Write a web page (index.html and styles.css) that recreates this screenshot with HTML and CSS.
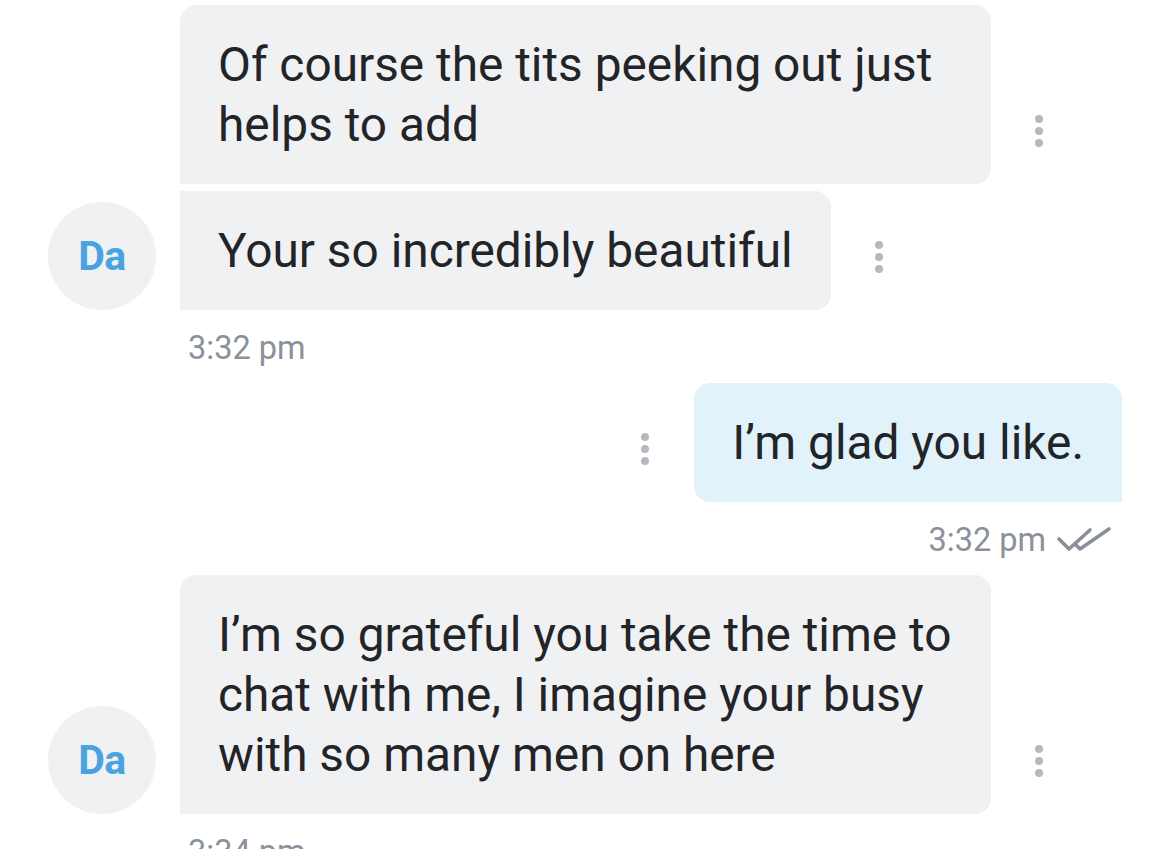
FILE: index.html
```html
<!DOCTYPE html>
<html>
<head>
<meta charset="utf-8">
<link rel="stylesheet" href="styles.css">
</head>
<body>
<div class="chat">
  <div class="group received">
    <div class="avatar">Da</div>
    <div class="bubbles">
      <div class="msg-row">
        <div class="bubble in first">Of course the tits peeking out just helps to add</div>
        <div class="dots"><span></span><span></span><span></span></div>
      </div>
      <div class="msg-row">
        <div class="bubble in last">Your so incredibly beautiful</div>
        <div class="dots"><span></span><span></span><span></span></div>
      </div>
    </div>
  </div>
  <div class="time in-time">3:32 pm</div>

  <div class="group sent">
    <div class="msg-row">
      <div class="dots"><span></span><span></span><span></span></div>
      <div class="bubble out">I’m glad you like.</div>
    </div>
  </div>
  <div class="time out-time">3:32 pm
    <svg class="ticks" width="56" height="28" viewBox="0 0 56 28" fill="none" stroke="#8a9098" stroke-width="3.6" stroke-linecap="round" stroke-linejoin="round">
      <polyline points="3,13 13,23 34,4"/>
      <polyline points="19,18 24,23 53,3"/>
    </svg>
  </div>

  <div class="group received">
    <div class="avatar">Da</div>
    <div class="bubbles">
      <div class="msg-row">
        <div class="bubble in single">I’m so grateful you take the time to chat with me, I imagine your busy with so many men on here</div>
        <div class="dots"><span></span><span></span><span></span></div>
      </div>
    </div>
  </div>
  <div class="time in-time">3:34 pm</div>
</div>
</body>
</html>
```

FILE: styles.css
```css
html, body {
  margin: 0;
  padding: 0;
  background: #ffffff;
}
body {
  font-family: Roboto, "Noto Sans", sans-serif;
  color: #222428;
  overflow: hidden;
  height: 849px;
}
.chat {
  padding-top: 5px;
  display: flex;
  flex-direction: column;
}
.group {
  display: flex;
  align-items: flex-end;
}
.group.received {
  padding-left: 48px;
  gap: 24px;
}
.group.sent {
  justify-content: flex-end;
  padding-right: 47px;
}
.avatar {
  width: 108px;
  height: 108px;
  flex: none;
  border-radius: 50%;
  background: #f0f1f3;
  color: #4aa3e0;
  font-weight: 700;
  font-size: 41px;
  display: flex;
  align-items: center;
  justify-content: center;
  letter-spacing: -0.5px;
}
.bubbles {
  display: flex;
  flex-direction: column;
  gap: 7px;
}
.msg-row {
  display: flex;
  align-items: flex-end;
}
.bubble {
  max-width: 811px;
  box-sizing: border-box;
  padding: 30px 38px 29px 38px;
  font-size: 47.8px;
  line-height: 60px;
  border-radius: 16px;
}
.bubble.in {
  background: #f0f1f3;
}
.bubble.in.first {
  border-bottom-left-radius: 0;
}
.bubble.in.last {
  border-top-left-radius: 0;
  border-bottom-left-radius: 0;
}
.bubble.in.single {
  border-bottom-left-radius: 0;
}
.bubble.out {
  background: #e1f2fb;
  border-bottom-right-radius: 0;
}
.dots {
  display: flex;
  flex-direction: column;
  gap: 4px;
  margin: 0 44px 37px 44px;
  flex: none;
}
.group.received .dots {
  margin-right: 0;
}
.group.sent .dots {
  margin-left: 0;
  margin-right: 45px;
}
.dots span {
  width: 8px;
  height: 8px;
  border-radius: 50%;
  background: #b5b8be;
}
.time {
  font-size: 32.5px;
  line-height: 36px;
  color: #8b9199;
  padding: 20px 0 17px 0;
}
.in-time {
  padding-left: 188px;
}
.out-time {
  display: flex;
  justify-content: flex-end;
  align-items: center;
  gap: 10px;
  padding-right: 57px;
}
.ticks {
  flex: none;
}
```
